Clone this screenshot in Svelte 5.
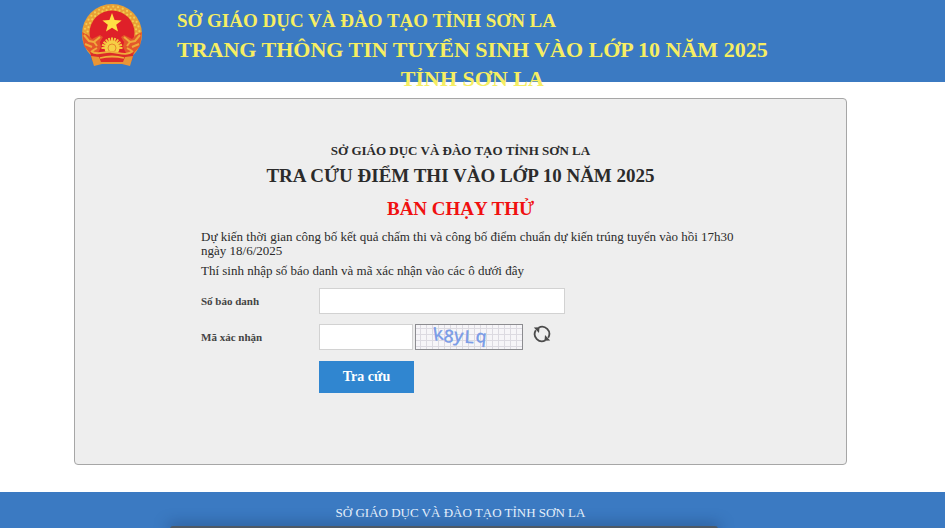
<script>
  let candidate = $state('');
  let code = $state('');

  const ringDots = Array.from({ length: 52 }, (_, i) => {
    const a = ((140 + (i * 260) / 51) * Math.PI) / 180;
    const r = i % 2 ? 24.5 : 27.5;
    return { x: 32 + r * Math.cos(a), y: 31 + r * Math.sin(a) };
  });
  const teeth = Array.from({ length: 11 }, (_, i) => -90 + i * 18);
  const columns = Array.from({ length: 17 }, (_, i) => 5 + i * 6);
  const rows = [4, 10, 16, 22];
</script>

<div class="page">
  <header>
    <svg class="emblem" viewBox="0 0 64 64" aria-hidden="true">
      <circle cx="32" cy="31" r="30" fill="#e9a035" />
      {#each ringDots as d}
        <circle cx={d.x} cy={d.y} r="1.1" fill="#f3cc52" />
      {/each}
      <circle cx="32" cy="30" r="22.500" fill="#df2029" />
      <path d="M32 10l2.600 7 7 .4-5.400 4.400 1.800 6.800-6-3.800-6 3.800 1.800-6.800-5.400-4.400 7-.4z" fill="#ffe044" />
      <path d="M12 40h40v16H12z" fill="#df2029" />
      <path d="M2 29l6 3 4 4 8-4 3 2-3 5 1 5-4 8-7-2-6-7z" fill="#e4572b" />
      <path d="M62 29l-6 3-4 4-8-4-3 2 3 5-1 5 4 8 7-2 6-7z" fill="#e4572b" />
      <path d="M4 32l5 6 5 1M20 34l-6 5 3 4M5 41l7 3M12 48l5-3" fill="none" stroke="#efaa3c" stroke-width="2" />
      <path d="M60 32l-5 6-5 1M44 34l6 5-3 4M59 41l-7 3M52 48l-5-3" fill="none" stroke="#efaa3c" stroke-width="2" />
      {#each teeth as angle}
        <rect x="31" y="34.500" width="2" height="4" fill="#f4c63f" transform={`rotate(${angle} 32 45)`} />
      {/each}
      <circle cx="32" cy="45" r="7.500" fill="#f6cf45" />
      <circle cx="32" cy="45" r="4" fill="none" stroke="#e68a2c" />
      <path d="M10 49c6 5 14-1 22 0s16 5 22 0l-2 8-4 5-8-2H24l-8 2-4-5z" fill="#dc2b28" />
      <path d="M11 48c6 5 13 0 21 1s15 4 21-1M20 55c8-2 16-2 24 0" fill="none" stroke="#efac3b" stroke-width="1.800" />
      <path d="M11 53l8 1 2 5h22l2-5 8-1-3 10-8-2H22l-8 2z" fill="#e99535" />
      <path d="M21 57h22" stroke="#dc2b28" stroke-width="2" />
    </svg>
    <div class="titles">
      <p>SỞ GIÁO DỤC VÀ ĐÀO TẠO TỈNH SƠN LA</p>
      <h1>TRANG THÔNG TIN TUYỂN SINH VÀO LỚP 10 NĂM 2025<br />TỈNH SƠN LA</h1>
    </div>
  </header>

  <main>
    <section class="card">
      <div class="heading">
        <h3>SỞ GIÁO DỤC VÀ ĐÀO TẠO TỈNH SƠN LA</h3>
        <h2>TRA CỨU ĐIỂM THI VÀO LỚP 10 NĂM 2025</h2>
        <h2 class="trial">BẢN CHẠY THỬ</h2>
      </div>
      <form onsubmit={(e) => e.preventDefault()}>
        <p>Dự kiến thời gian công bố kết quả chấm thi và công bố điểm chuẩn dự kiến trúng tuyển vào hồi 17h30 ngày 18/6/2025</p>
        <p>Thí sinh nhập số báo danh và mã xác nhận vào các ô dưới đây</p>
        <div class="row">
          <label for="candidate">Số báo danh</label>
          <input id="candidate" class="wide" type="text" bind:value={candidate} />
        </div>
        <div class="row">
          <label for="code">Mã xác nhận</label>
          <input id="code" type="text" autocomplete="off" bind:value={code} />
          <svg class="captcha" viewBox="0 0 108 26" role="img" aria-label="Mã xác nhận">
            <rect width="108" height="26" fill="#f6f5f8" />
            {#each columns as x}
              <path d={`M${x}.5 1v24`} stroke="#dcdae1" />
            {/each}
            {#each rows as y}
              <path d={`M1 ${y}.5h106`} stroke="#dcdae1" />
            {/each}
            <text y="17 18 17 19 18" x="19 28 38 49 60" rotate="-8 6 8 3 6">k8yLq</text>
            <rect x=".5" y=".5" width="107" height="25" fill="none" stroke="#8c8c90" />
          </svg>
          <button class="refresh" type="button" aria-label="Đổi mã xác nhận">
            <svg viewBox="0 0 18 18" aria-hidden="true">
              <path d="M5.500 2.700A7.200 7.200 0 0 1 15.200 12.700M12.500 15.300A7.200 7.200 0 0 1 2.800 5.300" fill="none" stroke="#4b4b4b" stroke-width="1.800" />
              <path d="M.8 2.500l5.700-.3L6 8zM17.200 15.500l-5.700.3L12 10z" fill="#4b4b4b" />
            </svg>
          </button>
        </div>
        <button class="submit" type="submit">Tra cứu</button>
      </form>
    </section>
  </main>

  <footer>SỞ GIÁO DỤC VÀ ĐÀO TẠO TỈNH SƠN LA</footer>
</div>

<style>
  .page {
    position: relative;
    min-height: 100vh;
    display: flex;
    flex-direction: column;
    overflow: hidden;
    background: #fff;
    color: #2b2b2b;
    font-family: 'Liberation Serif', 'Times New Roman', serif;
  }
  p, h1, h2, h3 { margin: 0; }
  header {
    box-sizing: border-box;
    height: 82px;
    padding: 3px 80px 0;
    display: flex;
    align-items: flex-start;
    gap: 33px;
    background: #3b7ac2;
    color: #f6ee62;
  }
  .emblem { width: 64px; height: 64px; flex: none; }
  .titles { padding-top: 4px; white-space: nowrap; }
  .titles p { font-size: 19px; line-height: 28px; font-weight: bold; }
  h1 { font-size: 22px; line-height: 29px; text-align: center; }
  main { flex: 1; padding: 16px 98px 27px 74px; }
  .card {
    box-sizing: border-box;
    padding: 44px 104px 71px 126px;
    border: 1px solid #a6a6a6;
    border-radius: 4px;
    background: #eee;
  }
  .heading { padding-right: 22px; text-align: center; }
  h3 { font-size: 13px; line-height: 16px; }
  h2 { margin-top: 8px; font-size: 19px; line-height: 25px; white-space: nowrap; }
  h3 + h2 { margin-top: 4px; }
  .trial { color: #f01010; }
  form { margin-top: 9px; }
  form p { margin-bottom: 6px; font-size: 13px; line-height: 14px; }
  .row { display: flex; align-items: center; margin-top: 10px; }
  label { width: 118px; font-size: 11px; font-weight: bold; color: #444; }
  input {
    box-sizing: border-box;
    width: 94px;
    height: 26px;
    padding: 2px 6px;
    border: 1px solid #d2d2d2;
    background: #fff;
    font: 13px 'Liberation Serif', serif;
  }
  input.wide { width: 246px; }
  .captcha { width: 108px; height: 26px; margin-left: 2px; overflow: visible; }
  .captcha text { font: 600 18px 'Open Sans', sans-serif; fill: #7d9de6; }
  .refresh { align-self: flex-start; margin-left: 10px; padding: 0; width: 18px; height: 20px; border: 0; background: none; cursor: pointer; }
  .refresh svg { display: block; width: 18px; height: 18px; }
  .submit {
    display: block;
    margin: 11px 0 0 118px;
    width: 95px;
    height: 32px;
    padding: 0;
    border: 0;
    background: #3086d0;
    color: #fff;
    font: bold 14px 'Liberation Serif', serif;
    cursor: pointer;
  }
  footer {
    position: relative;
    box-sizing: border-box;
    height: 36px;
    padding: 12px 24px 0 0;
    background: #3b7ac2;
    color: #eaf5ff;
    font-size: 13px;
    line-height: 17px;
    text-align: center;
  }
  footer::after {
    content: '';
    position: absolute;
    bottom: -1px;
    left: 18%;
    right: 24%;
    height: 3px;
    border-radius: 8px 8px 0 0;
    background: #4d5966;
    box-shadow: 0 0 14px 2px rgba(20, 45, 85, 0.5);
  }
</style>
